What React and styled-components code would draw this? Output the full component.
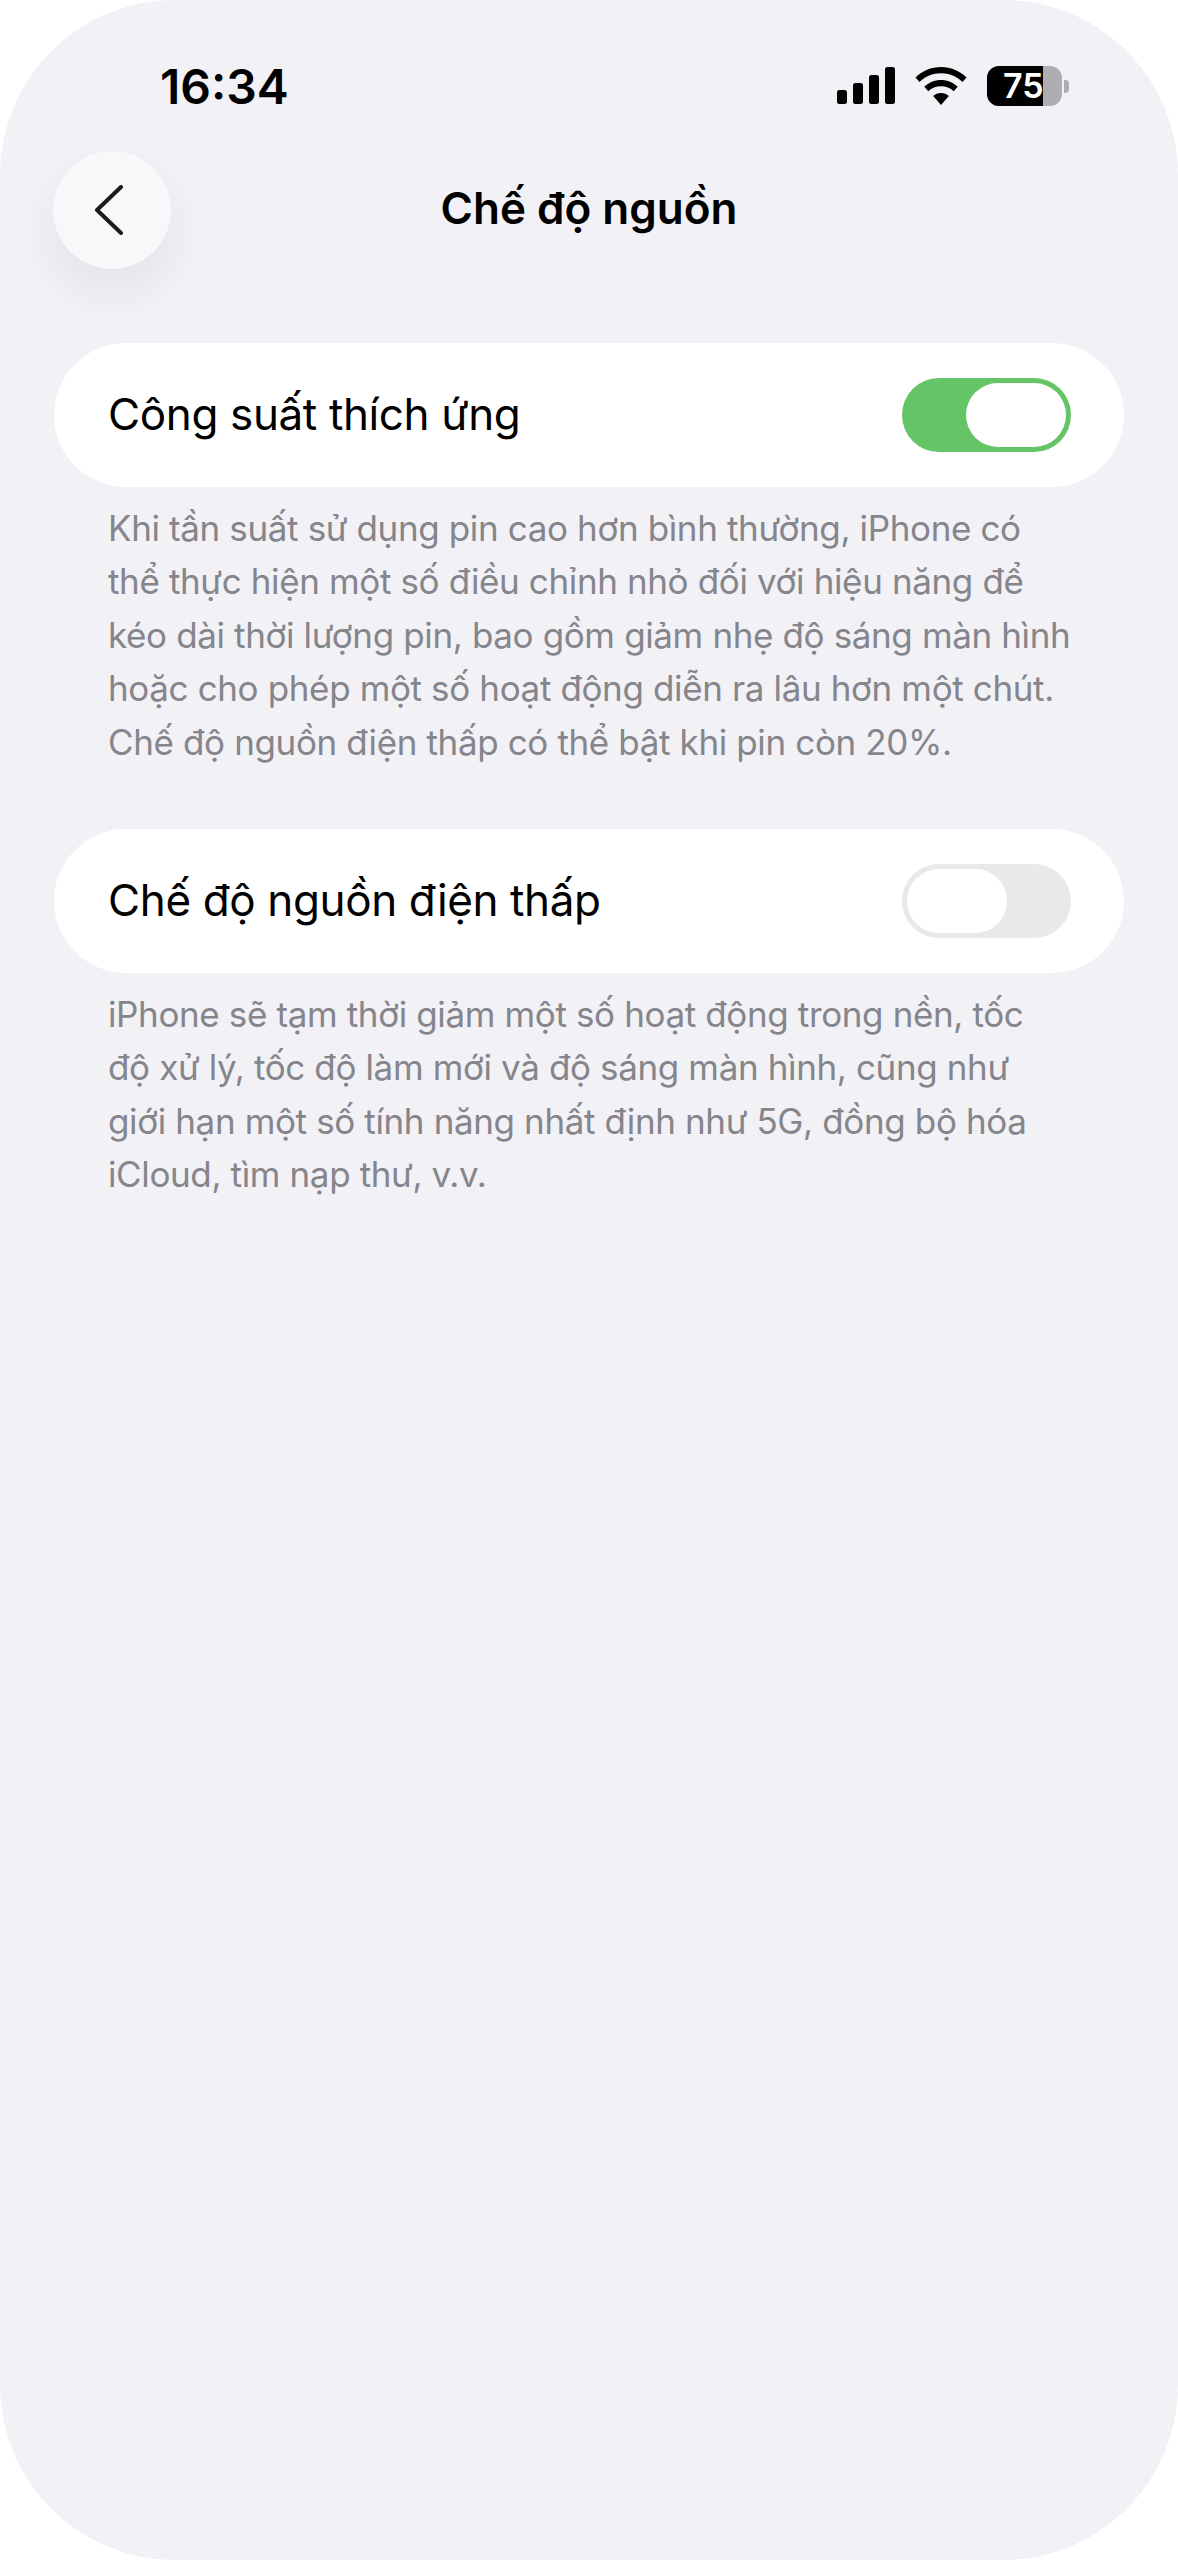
import React from "react";
import styled, { createGlobalStyle } from "styled-components";

const Global = createGlobalStyle`
  html, body { margin: 0; padding: 0; background: #ffffff; }
  body { font-family: Inter, "Noto Sans", "Liberation Sans", sans-serif; -webkit-font-smoothing: antialiased; }
`;

const Phone = styled.div`
  width: 1178px;
  height: 2560px;
  box-sizing: border-box;
  background: #f1f1f6;
  border-radius: 175px;
  display: flex;
  flex-direction: column;
  overflow: hidden;
`;

const StatusBar = styled.div`
  height: 151px;
  box-sizing: border-box;
  padding: 60px 109px 0 160px;
  display: flex;
  justify-content: space-between;
  align-items: flex-start;
`;

const Time = styled.div`
  font-size: 48px;
  line-height: 54px;
  font-weight: 600;
  color: #000;
`;

const StatusIcons = styled.div`
  display: flex;
  align-items: center;
  gap: 20px;
  padding-top: 6px;
`;

const Battery = styled.div`
  position: relative;
  display: flex;
  width: 75px;
  height: 40px;
  border-radius: 12px;
  overflow: hidden;
  background: #aeaeb2;
`;

const BatteryFill = styled.div`
  width: 56px;
  background: #000;
`;

const BatteryText = styled.span`
  position: absolute;
  left: 16px;
  top: 0;
  font-size: 34px;
  line-height: 40px;
  font-weight: 600;
  color: #fff;
`;

const BatteryGroup = styled.div`
  display: flex;
  align-items: center;
  gap: 2px;
`;

const BatteryCap = styled.div`
  width: 5px;
  height: 13px;
  border-radius: 0 4px 4px 0;
  background: #aeaeb2;
`;

const Nav = styled.div`
  display: grid;
  grid-template-columns: 118px 1fr 118px;
  align-items: center;
  padding: 0 53px;
  height: 118px;
`;

const BackButton = styled.button`
  width: 118px;
  height: 118px;
  border: none;
  padding: 0 6px 0 0;
  border-radius: 50%;
  background: #f8f8fb;
  box-shadow: 0 22px 44px rgba(40, 40, 60, 0.07);
  display: flex;
  align-items: center;
  justify-content: center;
`;

const Title = styled.h1`
  margin: 0 0 4px;
  text-align: center;
  font-size: 44px;
  line-height: 54px;
  font-weight: 600;
  color: #000;
`;

const Content = styled.div`
  padding: 74px 54px 0;
  display: flex;
  flex-direction: column;
  gap: 60px;
`;

const Card = styled.div`
  height: 144px;
  border-radius: 72px;
  background: #fff;
  box-sizing: border-box;
  padding: 0 53px 0 54px;
  display: flex;
  align-items: center;
  justify-content: space-between;
`;

const Label = styled.span`
  font-size: 44px;
  line-height: 52px;
  margin-bottom: 2px;
  font-weight: 400;
  letter-spacing: -0.37px;
  color: #000;
`;

const Track = styled.div`
  width: 169px;
  height: 74px;
  box-sizing: border-box;
  padding: 5px;
  border-radius: 37px;
  display: flex;
  justify-content: ${(p) => (p.$on ? "flex-end" : "flex-start")};
  background: ${(p) => (p.$on ? "#65c466" : "#e9e9ea")};
`;

const Knob = styled.div`
  width: 100px;
  height: 64px;
  border-radius: 32px;
  background: #fff;
`;

const Note = styled.p`
  margin: 15px 0 0;
  padding: 0 54px;
  font-size: 35px;
  line-height: 53.4px;
  letter-spacing: -0.37px;
  color: #85858b;
  white-space: nowrap;
`;

const Switch = ({ on }) => (
  <Track $on={on}>
    <Knob />
  </Track>
);

const Setting = ({ label, on, lines }) => (
  <section>
    <Card>
      <Label>{label}</Label>
      <Switch on={on} />
    </Card>
    <Note>
      {lines.map((l, i) => (
        <React.Fragment key={i}>
          {l}
          {i < lines.length - 1 && <br />}
        </React.Fragment>
      ))}
    </Note>
  </section>
);

export default function App() {
  return (
    <Phone>
      <Global />
      <StatusBar>
        <Time>16:34</Time>
        <StatusIcons>
          <svg width="58" height="38" viewBox="0 0 58 38" fill="#000">
            <rect x="0" y="23" width="10" height="14" rx="2.5" />
            <rect x="16" y="16" width="10" height="21" rx="2.5" />
            <rect x="32" y="8" width="10" height="29" rx="2.5" />
            <rect x="48" y="0" width="10" height="37" rx="2.5" />
          </svg>
          <svg width="52" height="38" viewBox="0 0 52 38" fill="#000">
            <path d="M26 0C16 0 7.500 3.800 0.500 10.500L4.500 15C10.300 9.500 17.700 6.300 26 6.300S41.700 9.500 47.500 15L51.500 10.500C44.500 3.800 36 0 26 0Z" />
            <path d="M26 13C19.500 13 13.800 15.500 9.300 19.700L13.300 24.200C16.700 21 21 19.200 26 19.200S35.300 21 38.700 24.200L42.700 19.700C38.200 15.500 32.500 13 26 13Z" />
            <path d="M26 26C22.900 26 20.300 27.100 18.200 29L26 38L33.800 29C31.700 27.100 29.100 26 26 26Z" />
          </svg>
          <BatteryGroup>
            <Battery>
              <BatteryFill />
              <BatteryText>75</BatteryText>
            </Battery>
            <BatteryCap />
          </BatteryGroup>
        </StatusIcons>
      </StatusBar>
      <Nav>
        <BackButton aria-label="Quay lại">
          <svg width="30" height="50" viewBox="0 0 30 50" fill="none" stroke="#1c1c1e" strokeWidth="4" strokeLinecap="round" strokeLinejoin="round">
            <path d="M27 2L3 25L27 48" />
          </svg>
        </BackButton>
        <Title>Chế độ nguồn</Title>
        <span />
      </Nav>
      <Content>
        <Setting
          label="Công suất thích ứng"
          on
          lines={[
            "Khi tần suất sử dụng pin cao hơn bình thường, iPhone có",
            "thể thực hiện một số điều chỉnh nhỏ đối với hiệu năng để",
            "kéo dài thời lượng pin, bao gồm giảm nhẹ độ sáng màn hình",
            "hoặc cho phép một số hoạt động diễn ra lâu hơn một chút.",
            "Chế độ nguồn điện thấp có thể bật khi pin còn 20%.",
          ]}
        />
        <Setting
          label="Chế độ nguồn điện thấp"
          lines={[
            "iPhone sẽ tạm thời giảm một số hoạt động trong nền, tốc",
            "độ xử lý, tốc độ làm mới và độ sáng màn hình, cũng như",
            "giới hạn một số tính năng nhất định như 5G, đồng bộ hóa",
            "iCloud, tìm nạp thư, v.v.",
          ]}
        />
      </Content>
    </Phone>
  );
}
